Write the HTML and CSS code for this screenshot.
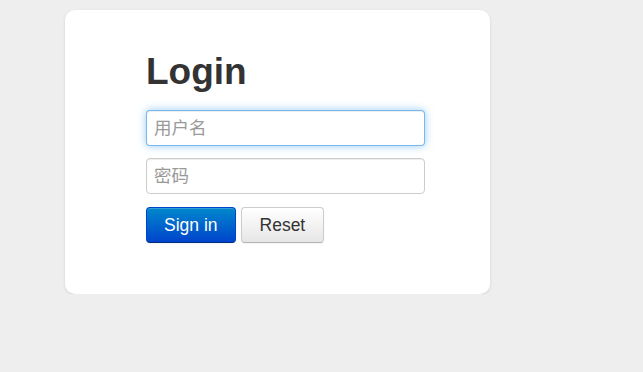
FILE: index.html
```html
<!DOCTYPE html>
<html>
<head>
  <meta charset="UTF-8" />
  <title>Login</title>
  <link rel="stylesheet" href="styles.css">
</head>
<body>
  <div class="container">
    <form class="form-signin" onsubmit="return false">
      <h1>Login</h1>
      <input type="text" class="form-control focused" placeholder="用户名" autofocus>
      <input type="password" class="form-control" placeholder="密码">
      <div class="actions">
        <button type="submit" class="btn btn-primary">Sign in</button>
        <button type="reset" class="btn btn-reset">Reset</button>
      </div>
    </form>
  </div>
</body>
</html>
```

FILE: styles.css
```css
* {
  box-sizing: border-box;
}
body {
  margin: 0;
  padding: 10px 0 0 65px;
  background: #eeeeee;
  font-family: "Liberation Sans", Arial, "Noto Sans CJK SC", sans-serif;
  color: #333;
}
.container {
  width: 425px;
  background: #fff;
  border-radius: 10px;
  box-shadow: 0 1px 3px rgba(0,0,0,0.12);
  padding: 42px 65px 51px 81px;
}
.form-signin h1 {
  margin: 0 0 18px;
  font-size: 37px;
  line-height: 40px;
  font-weight: bold;
  color: #333;
}
.form-signin .form-control {
  display: block;
  width: 279px;
  height: 36px;
  margin: 0 0 12px;
  padding: 7px 7px;
  font-size: 17.5px;
  line-height: 20px;
  font-family: "Liberation Sans", "Noto Sans CJK SC", sans-serif;
  color: #555;
  background: #fff;
  border: 1px solid #ccc;
  border-radius: 4px;
  box-shadow: inset 0 1px 1px rgba(0,0,0,0.075);
  outline: none;
}
.form-signin .form-control::placeholder {
  color: #999;
}
.form-signin .form-control.focused,
.form-signin .form-control:focus {
  border-color: rgba(82,168,236,0.8);
  box-shadow: inset 0 1px 1px rgba(0,0,0,0.075), 0 0 8px rgba(82,168,236,0.6);
}
.form-signin .actions {
  display: flex;
  gap: 5px;
  margin-top: 13px;
}
.btn {
  height: 36px;
  padding: 7px 17px;
  font-family: "Liberation Sans", Arial, sans-serif;
  font-size: 17.5px;
  line-height: 20px;
  color: #333;
  background-image: linear-gradient(to bottom, #ffffff, #e6e6e6);
  border: 1px solid #cccccc;
  border-bottom-color: #b3b3b3;
  border-radius: 4px;
  box-shadow: inset 0 1px 0 rgba(255,255,255,0.2), 0 1px 2px rgba(0,0,0,0.05);
  cursor: pointer;
}
.btn-reset {
  padding: 7px 18px;
}
.btn-primary {
  color: #fff;
  background-image: linear-gradient(to bottom, #0088cc, #0044cc);
  border-color: #0044cc #0044cc #002a80;
}
```
